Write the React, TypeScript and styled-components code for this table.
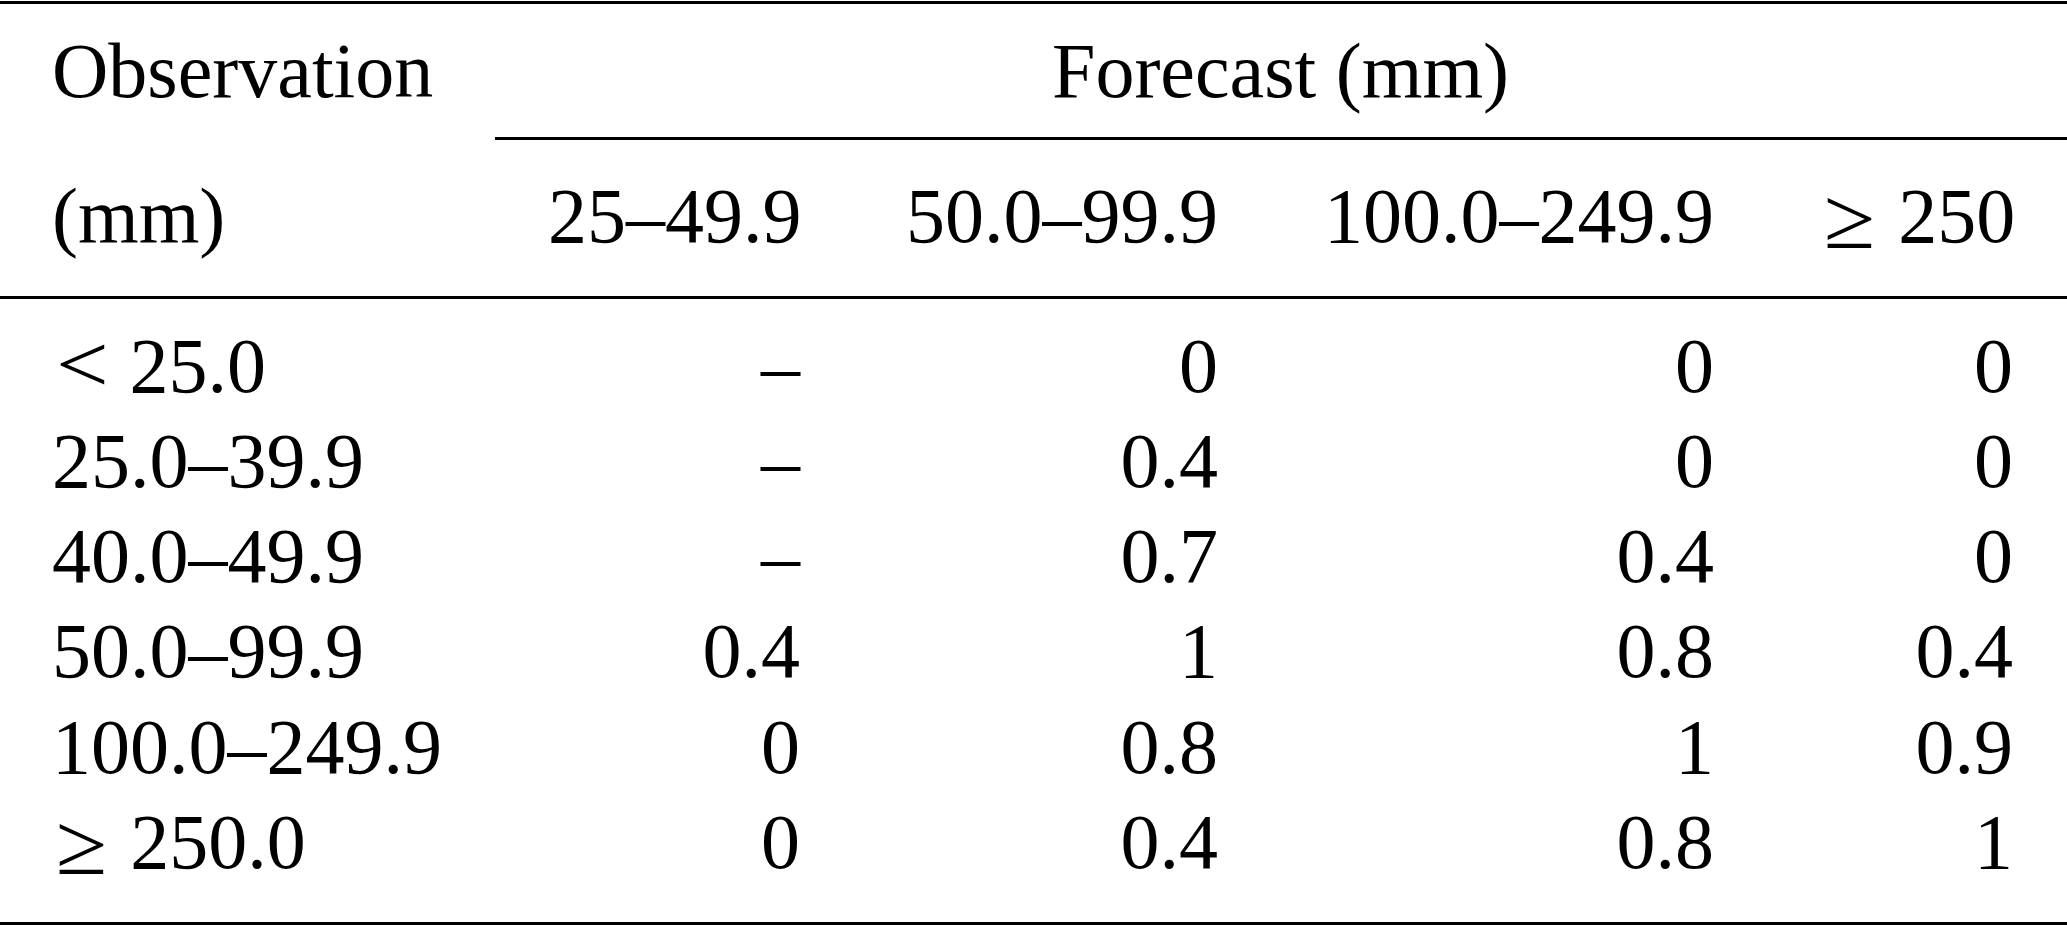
import styled, { createGlobalStyle } from "styled-components";

const GlobalStyle = createGlobalStyle`
  html, body {
    margin: 0;
    padding: 0;
    background: #fff;
  }
  body {
    font-family: "Liberation Serif", "Times New Roman", serif;
    color: #000;
  }
`;

const Page = styled.div`
  width: 2067px;
  padding-top: 1px;
`;

const Table = styled.table`
  width: 2067px;
  table-layout: fixed;
  border-collapse: separate;
  border-spacing: 0;
  border-top: 3px solid #000;
  border-bottom: 3px solid #000;
  font-size: 78px;
  line-height: 95.3px;
`;

type Align = "left" | "right" | "center";

// one cell kind for every row; the row decides the vertical padding
const Cell = styled.td<{ $align?: Align; $first?: boolean; $last?: boolean }>`
  padding: 0 ${(p) => (p.$last ? 54 : 53)}px 0 ${(p) => (p.$first ? 52 : 53)}px;
  text-align: ${(p) => p.$align || "right"};
  vertical-align: top;
  white-space: pre;
  font-weight: normal;
`;

const GroupCell = styled(Cell)`
  padding-top: 19px;
  padding-bottom: 19px;
`;

const SpanCell = styled(GroupCell)`
  border-bottom: 3px solid #000;
`;

const SubCell = styled(Cell)`
  padding-top: 28px;
  padding-bottom: 32px;
  border-bottom: 3px solid #000;
`;

const BodyRow = styled.tr<{ $pos: "first" | "middle" | "last" }>`
  & > td {
    padding-top: ${(p) => (p.$pos === "first" ? 19 : 0)}px;
    padding-bottom: ${(p) => (p.$pos === "last" ? 33 : 0)}px;
  }
`;

// math relation sign, drawn a little wider like TeX's < and \geq
const Rel = styled.span<{ $geq?: boolean }>`
  display: inline-block;
  margin-left: 4px;
  margin-right: ${(p) => (p.$geq ? 12 : 10)}px;
  transform-origin: 0 80%;
  transform: ${(p) =>
    p.$geq ? "translateY(6px) scale(1.2, 1.12)" : "scale(1.2, 1.05)"};
`;

const widths = [495, 358, 418, 496, 300];

const heads = ["25–49.9", "50.0–99.9", "100.0–249.9", "≥ 250"];

const rows: string[][] = [
  ["< 25.0", "–", "0", "0", "0"],
  ["25.0–39.9", "–", "0.4", "0", "0"],
  ["40.0–49.9", "–", "0.7", "0.4", "0"],
  ["50.0–99.9", "0.4", "1", "0.8", "0.4"],
  ["100.0–249.9", "0", "0.8", "1", "0.9"],
  ["≥ 250.0", "0", "0.4", "0.8", "1"],
];

const show = (v: string) => {
  if (v.startsWith("< ") || v.startsWith("≥ ")) {
    return (
      <>
        <Rel $geq={v[0] === "≥"}>{v[0]}</Rel>
        {v.slice(1)}
      </>
    );
  }
  return v;
};

export default function App() {
  return (
    <Page>
      <GlobalStyle />
      <Table>
        <colgroup>
          {widths.map((w, i) => (
            <col key={i} style={{ width: w }} />
          ))}
        </colgroup>
        <thead>
          <tr>
            <GroupCell as="th" $align="left" $first>
              Observation
            </GroupCell>
            <SpanCell as="th" colSpan={4} $align="center" $last>
              Forecast (mm)
            </SpanCell>
          </tr>
          <tr>
            <SubCell as="th" $align="left" $first>
              (mm)
            </SubCell>
            {heads.map((h, i) => (
              <SubCell as="th" key={h} $last={i === heads.length - 1}>
                {show(h)}
              </SubCell>
            ))}
          </tr>
        </thead>
        <tbody>
          {rows.map((r, ri) => (
            <BodyRow
              key={ri}
              $pos={ri === 0 ? "first" : ri === rows.length - 1 ? "last" : "middle"}
            >
              {r.map((v, ci) => (
                <Cell
                  key={ci}
                  $align={ci === 0 ? "left" : "right"}
                  $first={ci === 0}
                  $last={ci === r.length - 1}
                >
                  {show(v)}
                </Cell>
              ))}
            </BodyRow>
          ))}
        </tbody>
      </Table>
    </Page>
  );
}
